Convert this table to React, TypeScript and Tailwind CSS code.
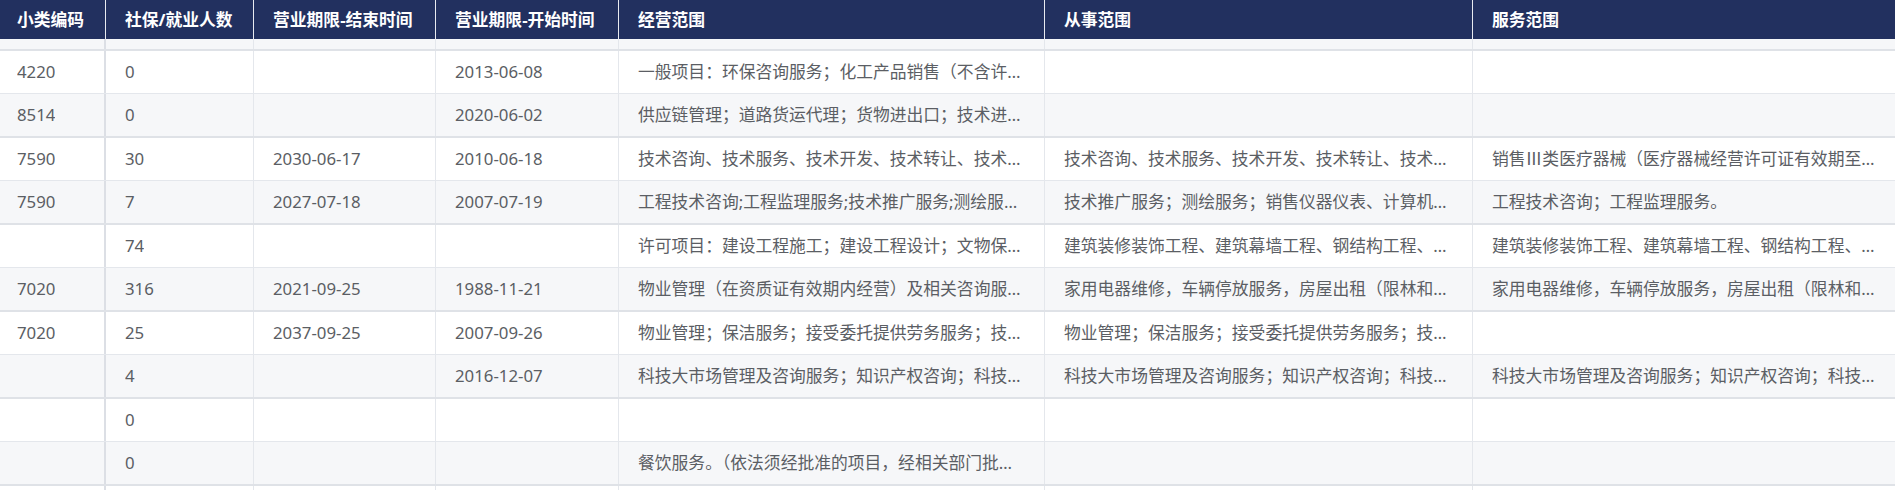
import React from "react";

type Row = {
  code: string;
  staff: string;
  end: string;
  start: string;
  business: string;
  engaged: string;
  service: string;
};

const rows: Row[] = [
  {
    code: "4220",
    staff: "0",
    end: "",
    start: "2013-06-08",
    business: "一般项目：环保咨询服务；化工产品销售（不含许可类化工产品）；技术服务、技术开发",
    engaged: "",
    service: "",
  },
  {
    code: "8514",
    staff: "0",
    end: "",
    start: "2020-06-02",
    business: "供应链管理；道路货运代理；货物进出口；技术进出口；国内货物运输代理",
    engaged: "",
    service: "",
  },
  {
    code: "7590",
    staff: "30",
    end: "2030-06-17",
    start: "2010-06-18",
    business: "技术咨询、技术服务、技术开发、技术转让、技术推广；销售医疗器械",
    engaged: "技术咨询、技术服务、技术开发、技术转让、技术推广；销售医疗器械",
    service: "销售Ⅲ类医疗器械（医疗器械经营许可证有效期至2025年）",
  },
  {
    code: "7590",
    staff: "7",
    end: "2027-07-18",
    start: "2007-07-19",
    business: "工程技术咨询;工程监理服务;技术推广服务;测绘服务;销售仪器仪表",
    engaged: "技术推广服务；测绘服务；销售仪器仪表、计算机软件及辅助设备",
    service: "工程技术咨询；工程监理服务。",
  },
  {
    code: "",
    staff: "74",
    end: "",
    start: "",
    business: "许可项目：建设工程施工；建设工程设计；文物保护工程施工",
    engaged: "建筑装修装饰工程、建筑幕墙工程、钢结构工程、…",
    service: "建筑装修装饰工程、建筑幕墙工程、钢结构工程、…",
  },
  {
    code: "7020",
    staff: "316",
    end: "2021-09-25",
    start: "1988-11-21",
    business: "物业管理（在资质证有效期内经营）及相关咨询服务；家用电器维修",
    engaged: "家用电器维修，车辆停放服务，房屋出租（限林和村）",
    service: "家用电器维修，车辆停放服务，房屋出租（限林和村）",
  },
  {
    code: "7020",
    staff: "25",
    end: "2037-09-25",
    start: "2007-09-26",
    business: "物业管理；保洁服务；接受委托提供劳务服务；技术服务",
    engaged: "物业管理；保洁服务；接受委托提供劳务服务；技术服务",
    service: "",
  },
  {
    code: "",
    staff: "4",
    end: "",
    start: "2016-12-07",
    business: "科技大市场管理及咨询服务；知识产权咨询；科技中介服务",
    engaged: "科技大市场管理及咨询服务；知识产权咨询；科技中介服务",
    service: "科技大市场管理及咨询服务；知识产权咨询；科技中介服务",
  },
  { code: "", staff: "0", end: "", start: "", business: "", engaged: "", service: "" },
  {
    code: "",
    staff: "0",
    end: "",
    start: "",
    business: "餐饮服务。（依法须经批准的项目，经相关部门批准后方可开展经营活动）",
    engaged: "",
    service: "",
  },
  { code: "", staff: "", end: "", start: "", business: "", engaged: "", service: "" },
];

const headers = [
  "小类编码",
  "社保/就业人数",
  "营业期限-结束时间",
  "营业期限-开始时间",
  "经营范围",
  "从事范围",
  "服务范围",
];

const grid = "grid grid-cols-[106px_148px_182px_183px_426px_428px_428px] w-[1901px]";

const Cells = ({ values, striped }: { values: string[]; striped: boolean }) => (
  <>
    {values.map((v, i) => (
      <div
        key={i}
        className={
          "flex items-center min-w-0 border-[#e4e7ec] " +
          (i === 0 ? "pl-[17px] pr-[12px] border-r-2 border-r-[#dcdfe5] " : "px-[19px] border-r ") +
          (striped ? "bg-[#f6f7f9]" : "bg-white")
        }
      >
        <span className="truncate">{v}</span>
      </div>
    ))}
  </>
);

const App = () => {
  return (
    <div
      className="w-[1895px] h-[490px] overflow-hidden bg-white text-[16.8px] text-[#5b5e64]"
      style={{ fontFamily: '"Noto Sans", "Noto Sans CJK SC", sans-serif' }}
    >
      <div className={grid + " h-[39px] bg-[#22305f] text-white font-bold"}>
        {headers.map((h, i) => (
          <div
            key={h}
            className={
              "flex items-center border-r border-[#e8eaf0] " + (i === 0 ? "pl-[17px]" : "pl-[19px]")
            }
          >
            {h}
          </div>
        ))}
      </div>

      {/* tail of the row scrolled above */}
      <div className={grid + " h-[12px] border-b-2 border-[#dfe2e7]"}>
        <Cells values={["", "", "", "", "", "", ""]} striped />
      </div>

      {rows.map((r, idx) => {
        const striped = idx % 2 === 1;
        return (
          <div
            key={idx}
            className={
              grid +
              (striped
                ? " h-[44px] border-b-2 border-[#dfe2e7]"
                : " h-[43px] border-b border-[#e4e7ec]")
            }
          >
            <Cells
              values={[r.code, r.staff, r.end, r.start, r.business, r.engaged, r.service]}
              striped={striped}
            />
          </div>
        );
      })}
    </div>
  );
};

export default App;
